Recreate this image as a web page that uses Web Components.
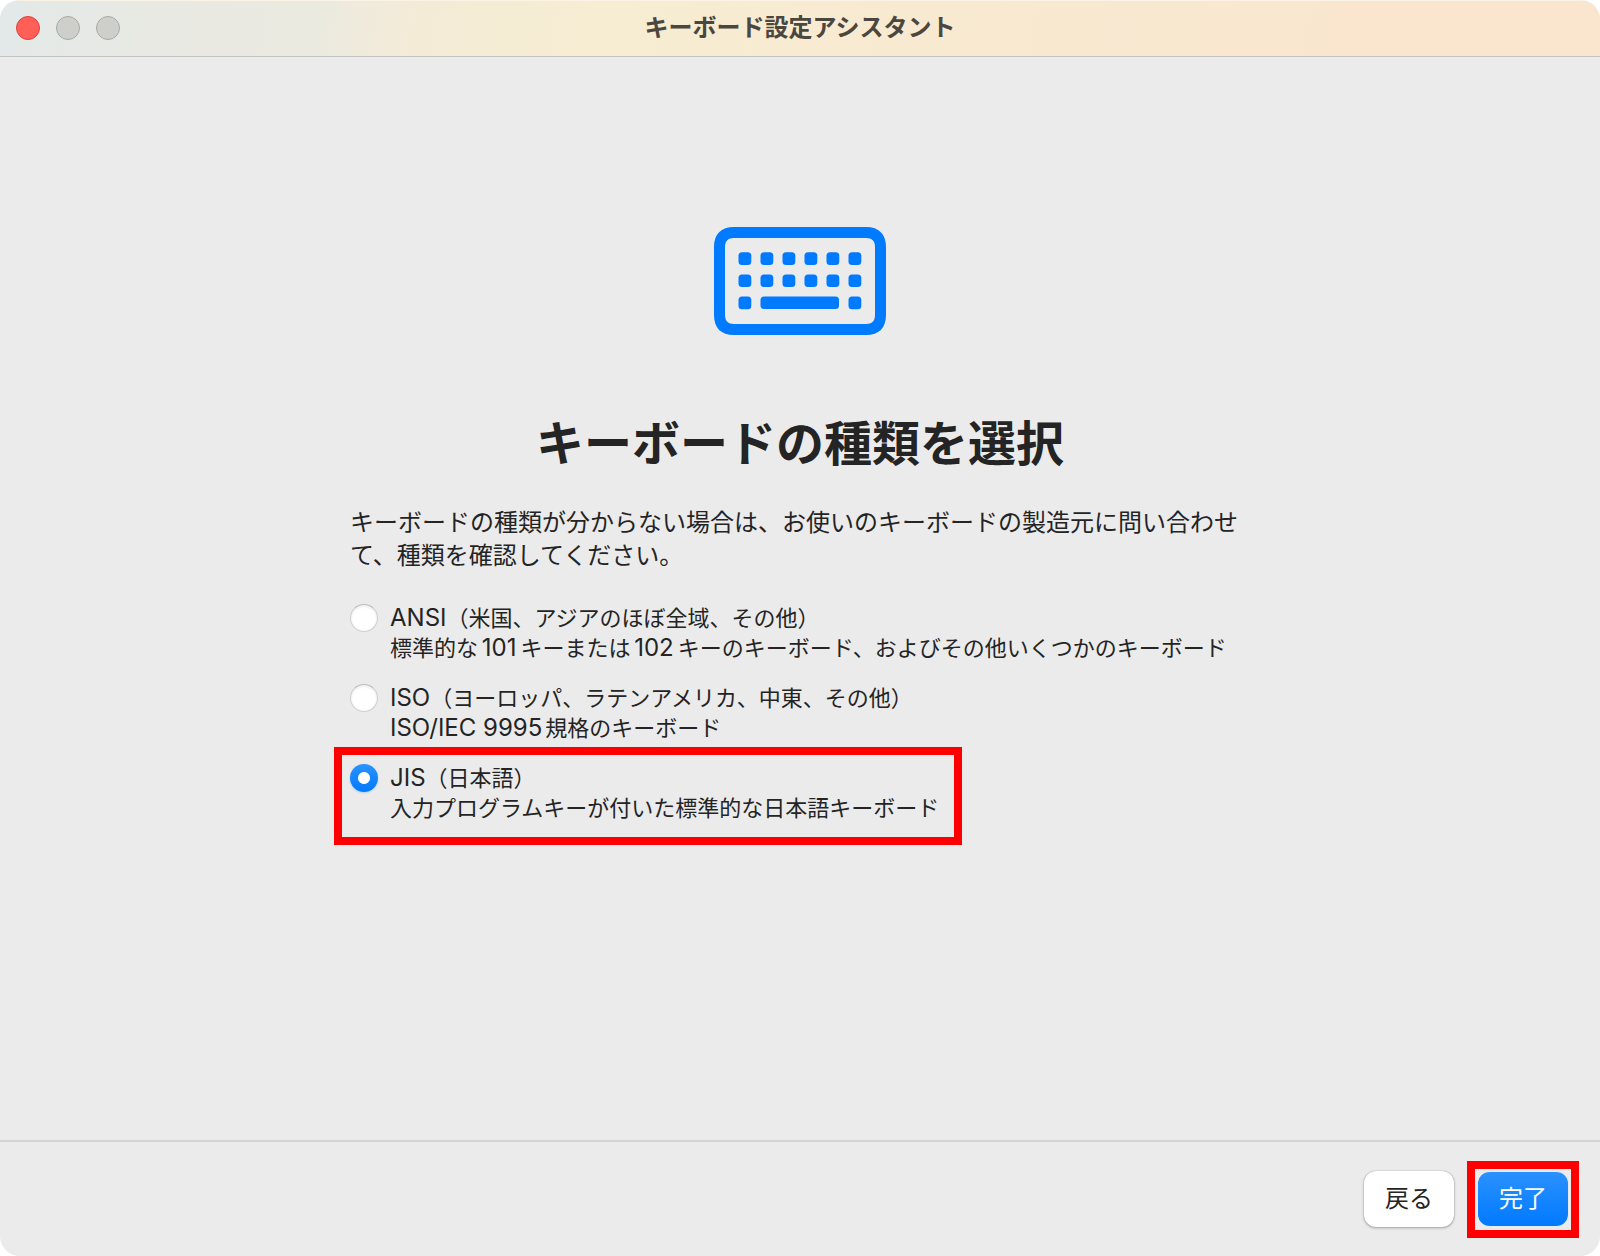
<!DOCTYPE html>
<html lang="ja">
<head>
<meta charset="utf-8">
<title>キーボード設定アシスタント</title>
<style>
  body { margin: 0; background: #fff; color: #242424; font-family: Inter, "Noto Sans CJK JP", sans-serif; }
</style>
</head>
<body>
<assistant-window>
  <title-bar slot="title">キーボード設定アシスタント</title-bar>
  <keyboard-icon></keyboard-icon>
  <page-intro>
    <span slot="heading">キーボードの種類を選択</span>
    キーボードの種類が分からない場合は、お使いのキーボードの製造元に問い合わせて、種類を確認してください。
  </page-intro>
  <keyboard-options></keyboard-options>
  <push-button slot="actions">戻る</push-button>
  <push-button slot="actions" primary marked>完了</push-button>
</assistant-window>

<script>
const define = (name, html, setup) => {
  const template = document.createElement('template');
  template.innerHTML = '<style>*{box-sizing:border-box}</style>' + html;
  customElements.define(name, class extends HTMLElement {
    constructor() {
      super();
      this.attachShadow({ mode: 'open' }).append(template.content.cloneNode(true));
      if (setup) setup(this.shadowRoot);
    }
  });
};

define('assistant-window', `
  <style>
    :host { display: flex; flex-direction: column; box-sizing: border-box; min-height: 100vh; background: #ebebeb; border-radius: 20px; overflow: hidden; }
    main { flex: 1; display: flex; flex-direction: column; align-items: center; padding: 170px 32px 32px; }
    footer { display: flex; justify-content: flex-end; gap: 24px; padding: 29px 32px; border-top: 2px solid #d4d4d4; }
  </style>
  <slot name="title"></slot>
  <main><slot></slot></main>
  <footer><slot name="actions"></slot></footer>`);

define('title-bar', `
  <style>
    :host { display: block; border-top: 1px solid #faf3e6; border-bottom: 1px solid #c3c3c3;
      background: linear-gradient(100deg, #e3e9e9 0%, #e8e9e3 9%, #ebeae0 20%, #f4ebd7 26%, #f6edd2 38%, #f8ebd2 50%, #f8e8d0 68%, #fae6cf 84%, #fae6cf 100%); }
    header { display: grid; grid-template-columns: 1fr auto 1fr; align-items: center; height: 55px; padding: 0 16px 1px; }
    .lights { display: flex; gap: 16px; }
    button { width: 24px; height: 24px; padding: 0; border: 1px solid #a9aaa5; border-radius: 50%; background: #cecfca; }
    button.close { background: #ff5f57; border-color: #dd4239; }
    h1 { margin: 0; font-size: 24px; line-height: 36px; font-weight: 700; color: #4b473f; }
  </style>
  <header>
    <div class="lights">
      <button class="close" aria-label="閉じる"></button>
      <button disabled aria-label="しまう"></button>
      <button disabled aria-label="拡大"></button>
    </div>
    <h1><slot></slot></h1>
  </header>`);

define('keyboard-icon', `
  <style>:host { display: block; } svg { display: block; }</style>
  <svg width="172" height="108" viewBox="0 0 172 108" fill="#007aff" aria-hidden="true">
    <path fill-rule="evenodd" d="M20 0H152C165 0 172 7 172 20V88C172 101 165 108 152 108H20C7 108 0 101 0 88V20C0 7 7 0 20 0ZM20 11C14 11 11 14 11 20V88C11 94 14 97 20 97H152C158 97 161 94 161 88V20C161 14 158 11 152 11Z"/>
    <g class="keys"></g>
    <rect x="46.5" y="69.5" width="78.5" height="12.5" rx="3.5"/>
  </svg>`, root => {
  const group = root.querySelector('.keys');
  for (let row = 0; row < 3; row++) for (let col = 0; col < 6; col++) {
    if (row === 2 && col > 0 && col < 5) continue;
    const key = document.createElementNS('http://www.w3.org/2000/svg', 'rect');
    const box = { x: 24.5 + col * 22, y: 25.3 + row * 22.1, width: 12.8, height: 12.7, rx: 3.5 };
    for (const name in box) key.setAttribute(name, box[name]);
    group.append(key);
  }
});

define('page-intro', `
  <style>
    :host { display: block; width: 100%; max-width: 900px; }
    h2 { margin: 73px 0 26px; font-size: 48px; line-height: 72px; font-weight: 700; text-align: center; }
    p { margin: 0; font-size: 24px; line-height: 33px; }
  </style>
  <h2><slot name="heading"></slot></h2>
  <p><slot></slot></p>`);

define('keyboard-options', `
  <style>
    :host { display: block; width: 100%; max-width: 900px; }
    fieldset { display: flex; flex-direction: column; align-items: flex-start; gap: 20px; margin: 0; padding: 31px 0 0; border: 0; min-width: 0; }
    .option { position: relative; display: flex; gap: 12px; font-size: 22px; line-height: 30px; }
    label { display: block; text-autospace: normal; }
    label > span { display: block; height: 30px; }
    b { font-size: 24px; font-weight: 400; }
    b.number { margin: 0 1px; }
    input { appearance: none; flex: none; width: 28px; height: 28px; margin: 1px 0; border-radius: 50%; border: 1px solid #cfcfcf; border-top-color: #bdbdbd; background: #fff; box-shadow: inset 0 1px 3px #0000001a; }
    input:checked { border: 0; background: radial-gradient(circle, #fff 5.5px, transparent 6.5px), linear-gradient(#2b93ff, #007aff); box-shadow: 0 1px 2px #007aff40; }
    .marked::after { content: ""; position: absolute; inset: -16px -23px -22px -16px; border: 8px solid #f00; pointer-events: none; }
  </style>
  <fieldset aria-label="キーボードの種類">
    <div class="option"><input type="radio" name="kind" id="ansi"><label for="ansi"><span><b>ANSI</b>（米国、アジアのほぼ全域、その他）</span><span>標準的な<b class="number">101</b>キーまたは<b class="number">102</b>キーのキーボード、およびその他いくつかのキーボード</span></label></div>
    <div class="option"><input type="radio" name="kind" id="iso"><label for="iso"><span><b>ISO</b>（ヨーロッパ、ラテンアメリカ、中東、その他）</span><span><b>ISO/IEC 9995</b>規格のキーボード</span></label></div>
    <div class="option marked"><input type="radio" name="kind" id="jis" checked><label for="jis"><span><b>JIS</b>（日本語）</span><span>入力プログラムキーが付いた標準的な日本語キーボード</span></label></div>
  </fieldset>`);

define('push-button', `
  <style>
    :host { display: block; position: relative; }
    button { display: block; width: 90px; height: 56px; padding: 0; border: 0; border-radius: 12px; background: #fff; color: #242424; font: inherit; font-size: 24px; line-height: 36px; box-shadow: 0 0 1px #0006, 0 1px 3px #0000004d; }
    :host([primary]) button { background: linear-gradient(#2b91ff, #007aff); background-clip: padding-box; border-block: 1px solid transparent; color: #fff; box-shadow: none; }
    :host([marked])::after { content: ""; position: absolute; inset: -10px -11px -11px; border: 8px solid #f00; pointer-events: none; }
  </style>
  <button type="button"><slot></slot></button>`);
</script>
</body>
</html>
